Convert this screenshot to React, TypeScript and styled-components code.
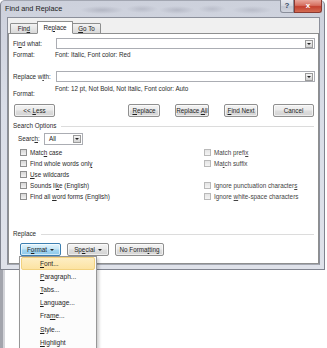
import React from 'react';
import styled, { createGlobalStyle } from 'styled-components';

const GlobalStyle = createGlobalStyle`
  html, body {
    margin: 0;
    padding: 0;
    background: #ffffff;
  }
  body {
    font-family: 'Liberation Sans', Arial, sans-serif;
    font-size: 6.3px;
    line-height: 8px;
    color: #2a2a2a;
  }
  * {
    box-sizing: border-box;
  }
`;

const Screen = styled.div`
  width: 327px;
  height: 348px;
  overflow: hidden;
  display: flex;
  flex-direction: column;
`;

const Window = styled.div`
  width: 325px;
  height: 270px;
  flex: none;
  background: linear-gradient(#cdd1dc, #d9dde7 40%, #dfe2ea);
  border: 1px solid #80848f;
  border-top-color: #a2a6b1;
  border-radius: 5px 5px 0 0;
  padding: 0 4px 4px 6px;
  display: flex;
  flex-direction: column;
`;

const TitleBar = styled.div`
  height: 16px;
  flex: none;
  display: flex;
  align-items: flex-start;
  background:
    radial-gradient(ellipse 22px 4px at 95px 9px, rgba(110, 112, 130, 0.28), transparent),
    radial-gradient(ellipse 16px 4px at 135px 8px, rgba(110, 112, 130, 0.22), transparent),
    radial-gradient(ellipse 18px 4px at 170px 9px, rgba(110, 112, 130, 0.25), transparent),
    radial-gradient(ellipse 14px 4px at 205px 8px, rgba(110, 112, 130, 0.2), transparent),
    radial-gradient(ellipse 20px 4px at 245px 9px, rgba(110, 112, 130, 0.22), transparent);
`;

const Title = styled.span`
  font-size: 7.3px;
  line-height: 9px;
  color: #1b1b1b;
  margin: 3px 0 0 -2px;
`;

const Spacer = styled.div`
  flex: 1;
`;

const CaptionButton = styled.div<{ $close?: boolean }>`
  width: ${(p) => (p.$close ? 28 : 14)}px;
  height: 13px;
  margin-top: -1px;
  display: flex;
  align-items: center;
  justify-content: center;
  font-size: 8px;
  font-weight: bold;
  color: ${(p) => (p.$close ? '#ffffff' : '#3b4a66')};
  border: 1px solid ${(p) => (p.$close ? '#8a3a32' : '#8a8e9a')};
  border-top: none;
  border-radius: ${(p) => (p.$close ? '0 0 3px 0' : '0 0 0 3px')};
  background: ${(p) =>
    p.$close
      ? 'linear-gradient(#e9a79c, #d66f60 45%, #c4402f 55%, #d36b52)'
      : 'linear-gradient(#e6e8ef, #d3d6df 50%, #c2c6d2 55%, #d2d5de)'};
  &:last-child {
    margin-right: -2px;
  }
`;

const Client = styled.div`
  flex: 1;
  background: #f0f0f0;
  border: 1px solid #8b8f9a;
  border-bottom-color: #a5a9b3;
  padding-top: 3px;
  display: flex;
  flex-direction: column;
`;

const TabRow = styled.div`
  display: flex;
  align-items: flex-end;
  padding-left: 2px;
  margin-bottom: -1px;
  position: relative;
  z-index: 1;
`;

const Tab = styled.div<{ $w: number; $active?: boolean }>`
  width: ${(p) => p.$w}px;
  height: ${(p) => (p.$active ? 13 : 11)}px;
  margin-right: ${(p) => (p.$active ? -1 : 0)}px;
  margin-left: ${(p) => (p.$active ? -1 : 0)}px;
  display: flex;
  align-items: center;
  justify-content: center;
  padding-top: ${(p) => (p.$active ? 0 : 1)}px;
  border: 1px solid #8e8f8f;
  border-bottom: ${(p) => (p.$active ? '1px solid #ffffff' : '1px solid #8e8f8f')};
  border-radius: 1px 1px 0 0;
  background: ${(p) => (p.$active ? '#ffffff' : 'linear-gradient(#f3f3f3, #e6e6e6 50%, #d9d9d9)')};
  color: #222222;
  position: relative;
  z-index: ${(p) => (p.$active ? 2 : 1)};
`;

const Panel = styled.div`
  flex: 1;
  background: #ffffff;
  border: 1px solid #8e8f8f;
  padding: 4px 3px 7px 4px;
  display: flex;
  flex-direction: column;
`;

const Key = styled.span`
  text-decoration: underline;
  text-underline-offset: 1px;
`;

const FieldRow = styled.div<{ $mt: number }>`
  display: flex;
  align-items: center;
  height: 11px;
  margin-top: ${(p) => p.$mt}px;
`;

const Label = styled.span`
  width: 43px;
  flex: none;
  white-space: nowrap;
`;

const Combo = styled.div<{ $w?: number }>`
  flex: ${(p) => (p.$w ? 'none' : '1')};
  width: ${(p) => (p.$w ? `${p.$w}px` : 'auto')};
  height: 100%;
  border: 1px solid #abadb3;
  background: #ffffff;
  display: flex;
  align-items: center;
  padding: 0 1px 0 4px;
  color: #222222;
`;

const ComboText = styled.span`
  flex: 1;
`;

const ComboButton = styled.div`
  width: 8px;
  height: 8px;
  border: 1px solid #9c9c9c;
  background: linear-gradient(#f6f6f6, #e2e2e2 50%, #d4d4d4);
  display: flex;
  align-items: center;
  justify-content: center;
`;

const Caret = styled.span<{ $gap?: number }>`
  width: 0;
  height: 0;
  border-left: 2px solid transparent;
  border-right: 2px solid transparent;
  border-top: 2px solid #222222;
  margin-left: ${(p) => p.$gap ?? 0}px;
`;

const FormatRow = styled.div<{ $mt: number; $h: number }>`
  display: flex;
  align-items: flex-start;
  height: ${(p) => p.$h}px;
  margin-top: ${(p) => p.$mt}px;
`;

const FormatLabel = styled.span<{ $pt: number }>`
  width: 42px;
  flex: none;
  padding-top: ${(p) => p.$pt}px;
`;

const FormatValue = styled.span<{ $pt: number }>`
  padding-top: ${(p) => p.$pt}px;
  white-space: nowrap;
`;

const ButtonRow = styled.div<{ $mt: number; $ml: number }>`
  display: flex;
  align-items: center;
  height: 13px;
  margin-top: ${(p) => p.$mt}px;
  margin-left: ${(p) => p.$ml}px;
  margin-right: 1px;
`;

const ButtonGroup = styled.div<{ $gap: number; $right?: boolean }>`
  display: flex;
  gap: ${(p) => p.$gap}px;
  margin-left: ${(p) => (p.$right ? 'auto' : '0')};
`;

const Button = styled.button<{ $w: number; $hot?: boolean }>`
  width: ${(p) => p.$w}px;
  height: 13px;
  padding: 0;
  font: inherit;
  color: #1e1e1e;
  white-space: nowrap;
  display: flex;
  align-items: center;
  justify-content: center;
  border: 1px solid ${(p) => (p.$hot ? '#3c7fb1' : '#8f8f8f')};
  border-radius: 2px;
  background: ${(p) =>
    p.$hot
      ? 'linear-gradient(#e3f4fc, #c4e5f6 48%, #a3d6f1 52%, #8ec9eb)'
      : 'linear-gradient(#f3f3f3, #ebebeb 48%, #dddddd 52%, #d4d4d4)'};
  box-shadow: inset 0 0 0 1px rgba(255, 255, 255, 0.6);
`;

const SectionRow = styled.div<{ $mt: number }>`
  display: flex;
  align-items: center;
  gap: 5px;
  height: 10px;
  margin-top: ${(p) => p.$mt}px;
  margin-right: 1px;
`;

const SectionRule = styled.div`
  flex: 1;
  height: 1px;
  background: #dcdcdc;
`;

const PushDown = styled.div`
  margin-top: auto;
`;

const SearchRow = styled.div`
  display: flex;
  align-items: center;
  height: 12px;
  margin-top: 2px;
  margin-left: 5px;
`;

const SearchLabel = styled.span`
  width: 26px;
  flex: none;
`;

const OptionGrid = styled.div`
  display: grid;
  grid-template-columns: 184px 1fr;
  grid-auto-rows: 11px;
  margin-top: 2px;
  margin-left: 7px;
`;

const Option = styled.div<{ $disabled?: boolean }>`
  display: flex;
  align-items: center;
  gap: 3px;
  white-space: nowrap;
  color: ${(p) => (p.$disabled ? '#444444' : '#2a2a2a')};
`;

const Check = styled.span<{ $disabled?: boolean }>`
  width: 7px;
  height: 7px;
  flex: none;
  border: 1px solid ${(p) => (p.$disabled ? '#b9b9b9' : '#8e8f8f')};
  background: ${(p) =>
    p.$disabled ? 'linear-gradient(#e4e4e4, #f4f4f4)' : 'linear-gradient(#d6d6d6, #f2f2f2)'};
`;

const MenuAnchor = styled.div`
  position: relative;
`;

const Menu = styled.div`
  position: absolute;
  top: 100%;
  left: -1px;
  width: 78px;
  z-index: 10;
  background: #fcfcfc;
  border: 1px solid #979797;
  box-shadow: 2px 2px 3px rgba(0, 0, 0, 0.2);
  padding: 0 1px 2px;
  font-size: 6.6px;
`;

const MenuItem = styled.div<{ $hover?: boolean }>`
  height: 13.2px;
  display: flex;
  align-items: center;
  padding-left: 18px;
  color: #1e1e1e;
  border-radius: 2px;
  background: ${(p) => (p.$hover ? 'linear-gradient(#fdeec4, #fce3a2)' : 'transparent')};
  border: 1px solid ${(p) => (p.$hover ? '#f2d27f' : 'transparent')};
`;

const Below = styled.div`
  flex: 1;
  border-left: 3px solid #a3a5ad;
  box-shadow: inset 2px 0 0 #d3d4d9;
`;

type OptionDef = { label: React.ReactNode; disabled?: boolean } | null;

const options: [OptionDef, OptionDef][] = [
  [
    { label: <span>Matc<Key>h</Key> case</span> },
    { label: <span>Match prefi<Key>x</Key></span>, disabled: true },
  ],
  [
    { label: <span>Find whole words onl<Key>y</Key></span> },
    { label: <span>Ma<Key>t</Key>ch suffix</span>, disabled: true },
  ],
  [{ label: <span><Key>U</Key>se wildcards</span> }, null],
  [
    { label: <span>Sounds li<Key>k</Key>e (English)</span> },
    { label: <span>Ignore punctuation character<Key>s</Key></span>, disabled: true },
  ],
  [
    { label: <span>Find all <Key>w</Key>ord forms (English)</span> },
    { label: <span>Ignore <Key>w</Key>hite-space characters</span>, disabled: true },
  ],
];

const menuItems: React.ReactNode[] = [
  <span><Key>F</Key>ont...</span>,
  <span><Key>P</Key>aragraph...</span>,
  <span><Key>T</Key>abs...</span>,
  <span><Key>L</Key>anguage...</span>,
  <span>Fra<Key>m</Key>e...</span>,
  <span><Key>S</Key>tyle...</span>,
  <span><Key>H</Key>ighlight</span>,
];

const App = () => {
  return (
    <Screen>
      <GlobalStyle />
      <Window>
        <TitleBar>
          <Title>Find and Replace</Title>
          <Spacer />
          <CaptionButton>?</CaptionButton>
          <CaptionButton $close>x</CaptionButton>
        </TitleBar>
        <Client>
          <TabRow>
            <Tab $w={28}><span>Fin<Key>d</Key></span></Tab>
            <Tab $w={36} $active><span>Re<Key>p</Key>lace</span></Tab>
            <Tab $w={29}><span><Key>G</Key>o To</span></Tab>
          </TabRow>
          <Panel>
            <FieldRow $mt={0}>
              <Label>Fi<Key>n</Key>d what:</Label>
              <Combo>
                <ComboText />
                <ComboButton><Caret /></ComboButton>
              </Combo>
            </FieldRow>
            <FormatRow $mt={1} $h={10}>
              <FormatLabel $pt={1}>Format:</FormatLabel>
              <FormatValue $pt={1}>Font: Italic, Font color: Red</FormatValue>
            </FormatRow>
            <FieldRow $mt={11}>
              <Label>Replace w<Key>i</Key>th:</Label>
              <Combo>
                <ComboText />
                <ComboButton><Caret /></ComboButton>
              </Combo>
            </FieldRow>
            <FormatRow $mt={1} $h={16}>
              <FormatLabel $pt={7}>Format:</FormatLabel>
              <FormatValue $pt={2}>Font: 12 pt, Not Bold, Not Italic, Font color: Auto</FormatValue>
            </FormatRow>
            <ButtonRow $mt={5} $ml={1}>
              <Button $w={41}><span>&lt;&lt; <Key>L</Key>ess</span></Button>
              <ButtonGroup $gap={15} $right>
                <Button $w={32}><span><Key>R</Key>eplace</span></Button>
                <Button $w={34}><span>Replace <Key>A</Key>ll</span></Button>
                <Button $w={34}><span><Key>F</Key>ind Next</span></Button>
                <Button $w={41}><span>Cancel</span></Button>
              </ButtonGroup>
            </ButtonRow>
            <SectionRow $mt={4}>
              <span>Search Options</span>
              <SectionRule />
            </SectionRow>
            <SearchRow>
              <SearchLabel>Searc<Key>h</Key>:</SearchLabel>
              <Combo $w={39}>
                <ComboText>All</ComboText>
                <ComboButton><Caret /></ComboButton>
              </Combo>
            </SearchRow>
            <OptionGrid>
              {options.map((pair, i) =>
                pair.map((opt, j) =>
                  opt ? (
                    <Option key={`${i}-${j}`} $disabled={opt.disabled}>
                      <Check $disabled={opt.disabled} />
                      {opt.label}
                    </Option>
                  ) : (
                    <div key={`${i}-${j}`} />
                  ),
                ),
              )}
            </OptionGrid>
            <PushDown>
              <SectionRow $mt={0}>
                <span>Replace</span>
                <SectionRule />
              </SectionRow>
            </PushDown>
            <ButtonRow $mt={4} $ml={7}>
              <ButtonGroup $gap={6}>
                <MenuAnchor>
                  <Button $w={41} $hot>
                    <span>F<Key>o</Key>rmat</span>
                    <Caret $gap={3} />
                  </Button>
                  <Menu>
                    {menuItems.map((item, i) => (
                      <MenuItem key={i} $hover={i === 0}>
                        {item}
                      </MenuItem>
                    ))}
                  </Menu>
                </MenuAnchor>
                <Button $w={42}>
                  <span>Sp<Key>e</Key>cial</span>
                  <Caret $gap={3} />
                </Button>
                <Button $w={49}><span>No Forma<Key>t</Key>ting</span></Button>
              </ButtonGroup>
            </ButtonRow>
          </Panel>
        </Client>
      </Window>
      <Below />
    </Screen>
  );
};

export default App;
